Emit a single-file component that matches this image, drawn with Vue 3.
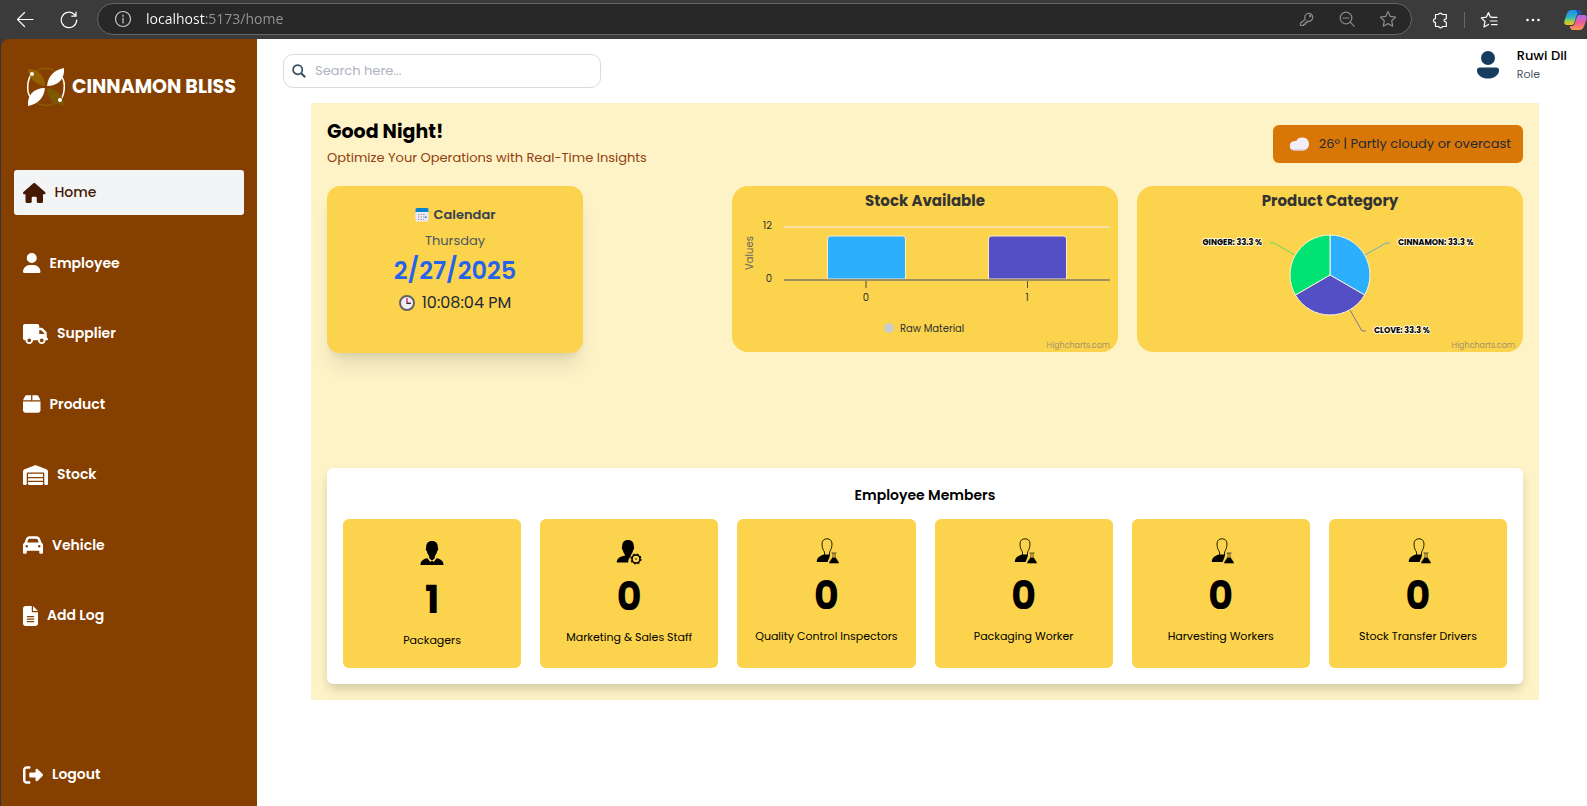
<script setup>
import { ref } from 'vue'

const search = ref('')
const address = ref('localhost:5173/home')

const nav = [
  { label: 'Home', w: 576, active: true, d: 'M575.8 255.5c0 18-15 32.1-32 32.1l-32 0 .7 160.2c0 2.7-.2 5.4-.5 8.1l0 16.2c0 22.1-17.9 40-40 40l-16 0c-1.1 0-2.2 0-3.3-.1c-1.4 .1-2.8 .1-4.2 .1L416 512l-24 0c-22.1 0-40-17.9-40-40l0-24 0-64c0-17.7-14.3-32-32-32l-64 0c-17.7 0-32 14.3-32 32l0 64 0 24c0 22.1-17.9 40-40 40l-24 0-31.9 0c-1.5 0-3-.1-4.5-.2c-1.2 .1-2.4 .2-3.6 .2l-16 0c-22.1 0-40-17.9-40-40l0-112c0-.9 0-1.9 .1-2.8l0-69.7-32 0c-18 0-32-14-32-32.1c0-9 3-17 10-24L266.4 8c7-7 15-8 22-8s15 2 21 7L564.8 231.5c8 7 12 15 11 24z' },
  { label: 'Employee', w: 448, d: 'M224 256A128 128 0 1 0 224 0a128 128 0 1 0 0 256zm-45.7 48C79.8 304 0 383.8 0 482.3C0 498.7 13.3 512 29.7 512l388.6 0c16.4 0 29.7-13.3 29.7-29.7C448 383.8 368.2 304 269.7 304l-91.4 0z' },
  { label: 'Supplier', w: 640, d: 'M48 0C21.5 0 0 21.5 0 48L0 368c0 26.5 21.5 48 48 48l16 0c0 53 43 96 96 96s96-43 96-96l128 0c0 53 43 96 96 96s96-43 96-96l32 0c17.7 0 32-14.3 32-32s-14.3-32-32-32l0-64 0-32 0-18.7c0-17-6.7-33.3-18.7-45.3L512 114.7c-12-12-28.3-18.7-45.3-18.7L416 96l0-48c0-26.5-21.5-48-48-48L48 0zM416 160l50.7 0L544 237.3l0 18.7-128 0 0-96zM112 416a48 48 0 1 1 96 0 48 48 0 1 1 -96 0zm368-48a48 48 0 1 1 0 96 48 48 0 1 1 0-96z' },
  { label: 'Product', w: 448, d: 'M50.7 58.5L0 160l208 0 0-128L93.7 32C75.5 32 58.9 42.3 50.7 58.5zM240 160l208 0L397.3 58.5C389.1 42.3 372.5 32 354.3 32L240 32l0 128zm208 32L0 192 0 416c0 35.3 28.7 64 64 64l320 0c35.3 0 64-28.7 64-64l0-224z' },
  { label: 'Stock', w: 640, d: 'M0 488L0 171.3c0-26.2 15.9-49.7 40.2-59.4L308.1 4.8c7.6-3.1 16.1-3.1 23.8 0L599.8 111.9c24.3 9.7 40.2 33.3 40.2 59.4L640 488c0 13.3-10.7 24-24 24l-48 0c-13.3 0-24-10.7-24-24l0-264c0-17.7-14.3-32-32-32l-384 0c-17.7 0-32 14.3-32 32l0 264c0 13.3-10.7 24-24 24l-48 0c-13.3 0-24-10.7-24-24zm488 24l-336 0c-13.3 0-24-10.7-24-24l0-56 384 0 0 56c0 13.3-10.7 24-24 24zM128 400l0-64 384 0 0 64-384 0zm0-96l0-80 384 0 0 80-384 0z' },
  { label: 'Vehicle', w: 512, d: 'M135.2 117.4L109.1 192l293.8 0-26.1-74.6C372.3 104.6 360.2 96 346.6 96L165.4 96c-13.6 0-25.7 8.6-30.2 21.4zM39.6 196.8L74.8 96.3C88.3 57.8 124.6 32 165.4 32l181.2 0c40.8 0 77.1 25.8 90.6 64.3l35.2 100.5c23.2 9.6 39.6 32.5 39.6 59.2l0 144 0 48c0 17.7-14.3 32-32 32l-32 0c-17.7 0-32-14.3-32-32l0-48L96 400l0 48c0 17.7-14.3 32-32 32l-32 0c-17.7 0-32-14.3-32-32l0-48L0 256c0-26.7 16.4-49.6 39.6-59.2zM128 288a32 32 0 1 0 -64 0 32 32 0 1 0 64 0zm288 32a32 32 0 1 0 0-64 32 32 0 1 0 0 64z' },
  { label: 'Add Log', w: 384, d: 'M64 0C28.7 0 0 28.7 0 64L0 448c0 35.3 28.7 64 64 64l256 0c35.3 0 64-28.7 64-64l0-288-128 0c-17.7 0-32-14.3-32-32L224 0 64 0zM256 0l0 128 128 0L256 0zM112 256l160 0c8.8 0 16 7.2 16 16s-7.2 16-16 16l-160 0c-8.8 0-16-7.2-16-16s7.2-16 16-16zm0 64l160 0c8.8 0 16 7.2 16 16s-7.2 16-16 16l-160 0c-8.8 0-16-7.2-16-16s7.2-16 16-16zm0 64l160 0c8.8 0 16 7.2 16 16s-7.2 16-16 16l-160 0c-8.8 0-16-7.2-16-16s7.2-16 16-16z' },
]
const logout = 'M377.9 105.9L500.7 228.7c7.2 7.2 11.3 17.1 11.3 27.3s-4.1 20.1-11.3 27.3L377.9 406.1c-6.4 6.4-15 9.9-24 9.9c-18.7 0-33.9-15.2-33.9-33.9l0-62.1-128 0c-17.7 0-32-14.3-32-32l0-64c0-17.7 14.3-32 32-32l128 0 0-62.1c0-18.7 15.2-33.9 33.9-33.9c9 0 17.6 3.6 24 9.9zM160 96L96 96c-17.7 0-32 14.3-32 32l0 256c0 17.7 14.3 32 32 32l64 0c17.7 0 32 14.3 32 32s-14.3 32-32 32l-64 0c-53 0-96-43-96-96L0 128C0 75 43 32 96 32l64 0c17.7 0 32 14.3 32 32s-14.3 32-32 32z'

const staff = [
  { label: 'Packagers', count: 1, icon: 'manager' },
  { label: 'Marketing & Sales Staff', count: 0, icon: 'gear' },
  { label: 'Quality Control Inspectors', count: 0, icon: 'flask' },
  { label: 'Packaging Worker', count: 0, icon: 'flask' },
  { label: 'Harvesting Workers', count: 0, icon: 'flask' },
  { label: 'Stock Transfer Drivers', count: 0, icon: 'flask' },
]
</script>

<template>
  <div class="window">
    <header class="browser">
      <button class="tool" aria-label="Back">
        <svg width="18" height="18" viewBox="0 0 18 18" class="line"><path d="M17 8.500H1.500M8.500 1.500L1.500 8.500l7 7" /></svg>
      </button>
      <button class="tool reload" aria-label="Refresh">
        <svg width="18" height="18" viewBox="0 0 18 18" class="line"><path d="M16.700 9a7.700 7.700 0 1 1-2.800-6l1.600 1.500M16 1v4.200h-4.200" /></svg>
      </button>
      <div class="address">
        <svg width="18" height="18" viewBox="0 0 18 18" class="line"><circle cx="9" cy="9" r="7.500" /><path d="M9 8v5M9 5v1.300" /></svg>
        <input v-model="address" class="url" aria-label="Address" spellcheck="false" />
        <div class="marks">
          <button class="tool dim" aria-label="Passwords">
            <svg width="16" height="16" viewBox="0 0 16 16" class="line"><path d="M6.200 8.200A4 4 0 1 1 9.200 10.300L8 10.200v1.500H6.300v1.600H4.600v1.200H1.500v-2.300z" /><circle cx="11.200" cy="5" r=".6" /></svg>
          </button>
          <button class="tool dim" aria-label="Zoom out">
            <svg width="16" height="16" viewBox="0 0 16 16" class="line"><circle cx="7" cy="7" r="5.800" /><path d="M4 7h6M11.200 11.200l4 4" /></svg>
          </button>
          <button class="tool dim" aria-label="Add to favorites">
            <svg width="18" height="18" viewBox="0 0 18 18" class="line"><path d="M9 1.500l2.300 4.900 5.300.7-3.900 3.700 1 5.400L9 13.600l-4.700 2.600 1-5.400L1.400 7.100l5.300-.7z" /></svg>
          </button>
        </div>
      </div>
      <div class="tools">
        <button class="tool" aria-label="Extensions">
          <svg width="18" height="18" viewBox="0 0 18 18" class="line"><path d="M4.500 3.500h3a2 2 0 0 1 3.800 0h4V7.200a1 1 0 0 1-1 1 1.200 1.200 0 0 0 0 2.400 1 1 0 0 1 1 1v3.900h-3.800a2 2 0 0 1-3.800 0H4.500v-3.900a2 2 0 0 1 0-4z" /></svg>
        </button>
        <span class="rule"></span>
        <button class="tool" aria-label="Favorites">
          <svg width="18" height="18" viewBox="0 0 18 18" class="line"><path d="M12 6.200l-1.700-.2L8.500 1.500 6.300 6.200l-5 .7L5 10.500l-1 5.500 4.500-2.600M11.500 6.300H17M10.500 10H17M11.500 13.700H17" /></svg>
        </button>
        <button class="tool" aria-label="Settings and more">
          <svg width="18" height="18" viewBox="0 0 18 18" fill="#fff"><circle cx="3.500" cy="9" r="1.300" /><circle cx="9" cy="9" r="1.300" /><circle cx="14.500" cy="9" r="1.300" /></svg>
        </button>
        <button class="tool" aria-label="Copilot">
          <svg width="23" height="22" viewBox="0 0 23 22">
            <defs>
              <linearGradient id="cool" x1="0" y1="0" x2="0" y2="1"><stop offset="0" stop-color="#1b8df0" /><stop offset=".5" stop-color="#2fb5c4" /><stop offset=".75" stop-color="#a0cf45" /><stop offset="1" stop-color="#f5c518" /></linearGradient>
              <linearGradient id="warm" x1="0" y1="0" x2="0" y2="1"><stop offset="0" stop-color="#a56bf5" /><stop offset=".5" stop-color="#ee5a9b" /><stop offset="1" stop-color="#fb9a4b" /></linearGradient>
            </defs>
            <path d="M8 1h6c2 0 2.700 1.500 3.200 4h-2c-2 0-2.600 1.200-3.200 3.200l-1.600 5.300C9.700 15.500 8.800 16 7 16H3C.5 16-.2 14 .5 11.500L3 4.500C4 2 5.500 1 8 1z" fill="url(#cool)" />
            <path d="M14 1c2 0 2.700 1.500 3.200 4h-3.700L12 1z" fill="#1b4fc4" />
            <path d="M16 6h4c2.500 0 3.200 2 2.500 4.500L20 17.500c-1 2.500-2.500 3.500-5 3.500H9c-2 0-2.700-1.500-3.200-4h2c2 0 2.600-1.200 3.200-3.200l1.600-5.300C13.300 6.500 14.200 6 16 6z" fill="url(#warm)" />
          </svg>
        </button>
      </div>
    </header>

    <div class="page">
      <aside class="sidebar">
        <div class="brand">
          <svg width="40" height="40" viewBox="0 0 40 40">
            <circle cx="20" cy="20" r="18.500" fill="none" stroke="#8f5a06" stroke-width="1.500" />
            <path d="M5.500 7C1 13 .5 25 4 29.500M34.500 33C39 27 39.500 15 36 10.500" fill="none" stroke="#fff" stroke-width="1.500" />
            <path d="M2 2c9 0 17 6 17 17C10 18 3 12 2 2z" fill="#946300" />
            <path d="M38 38c-9 0-17-6-17-17 9 1 16 7 17 17z" fill="#7d5a00" />
            <path d="M38 1c1 10-5 18-17 18C22 9 28 3 38 1z" fill="#fff" />
            <path d="M2 39c-1-10 5-18 17-18C18 31 12 37 2 39z" fill="#fff" />
            <circle cx="6" cy="7" r="2" fill="#fff" /><circle cx="34" cy="33" r="2" fill="#fff" />
          </svg>
          <span>CINNAMON BLISS</span>
        </div>
        <nav>
          <a v-for="n in nav" :key="n.label" href="#" class="item" :class="{ active: n.active }">
            <svg height="20" :viewBox="`0 0 ${n.w} 512`" fill="currentColor"><path :d="n.d" /></svg>{{ n.label }}
          </a>
        </nav>
        <button class="item logout">
          <svg height="20" viewBox="0 0 512 512" fill="currentColor"><path :d="logout" /></svg>Logout
        </button>
      </aside>

      <main>
        <div class="topbar">
          <label class="search">
            <svg width="14" height="14" viewBox="0 0 14 14" fill="none" stroke="#374f63" stroke-width="1.700"><circle cx="5.700" cy="5.700" r="4.600" /><path d="M9 9l4.200 4.200" stroke-width="2" /></svg>
            <input v-model="search" placeholder="Search here..." aria-label="Search" />
          </label>
          <div class="user">
            <svg width="22" height="28" viewBox="0 0 22 28" fill="#163d60"><circle cx="11" cy="7" r="7" /><path d="M3 16.500h16a3 3 0 0 1 3 3.200C22 24 17 27.500 11 27.500S0 24 0 19.700a3 3 0 0 1 3-3.200z" /></svg>
            <div><strong>Ruwi Dil</strong><span>Role</span></div>
          </div>
        </div>

        <section class="panel">
          <div class="intro">
            <div>
              <h1>Good Night!</h1>
              <p>Optimize Your Operations with Real-Time Insights</p>
            </div>
            <div class="weather">
              <svg width="20" height="14" viewBox="0 0 20 14"><path d="M5 13.500a4.700 4.700 0 0 1-.3-9.300c1.200-.4 2-.2 3-.8C9 .8 11.500.3 14 .5c3.500.2 6 3 6 6.500s-2.500 6.500-6 6.500z" fill="#f3eef9" /><path d="M1.500 11.500c1 1 2 1.500 3.500 1.500h9c2 0 3.600-.7 4.600-2" fill="none" stroke="#cfc0dd" /></svg>
              <span>26° | Partly cloudy or overcast</span>
            </div>
          </div>

          <div class="charts">
            <div class="calendar">
              <h2>
                <svg width="14" height="14" viewBox="0 0 14 14"><rect x=".5" y=".5" width="13" height="13" rx="1.500" fill="#eceaf6" /><path d="M2 0h10a1.500 1.500 0 0 1 1.500 1.500V4H.5V1.500A1.500 1.500 0 0 1 2 0z" fill="#0784cc" /><path d="M3 6.500h8M3 9h8M3 11.500h6" stroke="#83839a" stroke-dasharray="1.200 1.400" /><path d="M10 8.500h1.500v1.500H10z" fill="#0784cc" /></svg>
                Calendar
              </h2>
              <p class="day">Thursday</p>
              <p class="date">2/27/2025</p>
              <p class="time">
                <svg width="16" height="16" viewBox="0 0 16 16"><circle cx="8" cy="8" r="7" fill="#f1eff5" stroke="#636363" stroke-width="2" /><path d="M8 8.500V3" stroke="#e0245e" stroke-width="1.400" /><path d="M7.500 8.300H12" stroke="#333" stroke-width="1.400" /></svg>
                10:08:04 PM
              </p>
            </div>

            <svg class="chart" viewBox="0 0 386 166" role="img" aria-label="Stock Available">
              <text x="193" y="20" class="title">Stock Available</text>
              <path d="M52 41h326" stroke="#f5dfa4" stroke-width="2" />
              <path d="M95.500 93V53a3 3 0 0 1 3-3h72a3 3 0 0 1 3 3v40z" fill="#2caffe" stroke="#fbecc4" />
              <path d="M256.500 93V53a3 3 0 0 1 3-3h72a3 3 0 0 1 3 3v40z" fill="#544fc5" stroke="#fbecc4" />
              <path d="M52 94h326" stroke="#a29061" stroke-width="2" />
              <path d="M134 95v7" stroke="#a68d42" stroke-width="2" />
              <path d="M295.500 95v7" stroke="#5e5030" />
              <g class="label"><text x="40" y="43" text-anchor="end">12</text><text x="40" y="96" text-anchor="end">0</text><text x="134" y="115" text-anchor="middle">0</text><text x="295" y="115" text-anchor="middle">1</text></g>
              <text transform="rotate(-90 21 67)" x="21" y="67" text-anchor="middle" class="axis">Values</text>
              <circle cx="157" cy="142" r="5" fill="#ccc" />
              <text x="168" y="146" class="legend">Raw Material</text>
              <text x="378" y="162" text-anchor="end" class="credit">Highcharts.com</text>
            </svg>

            <svg class="chart" viewBox="0 0 386 166" role="img" aria-label="Product Category">
              <text x="193" y="20" class="title">Product Category</text>
              <g stroke="#fdf3d2" stroke-linejoin="round">
                <path d="M193 89V49a40 40 0 0 1 34.640 60z" fill="#2caffe" />
                <path d="M193 89l34.640 20a40 40 0 0 1-69.280 0z" fill="#544fc5" />
                <path d="M193 89l-34.640 20A40 40 0 0 1 193 49z" fill="#00e272" />
              </g>
              <g fill="none">
                <path d="M228 69l21-12h4" stroke="#64b2c2" />
                <path d="M213 124l12 21h4" stroke="#82719a" />
                <path d="M158 69l-21-12h-4" stroke="#63d95d" />
              </g>
              <g class="slice"><text x="125" y="59" text-anchor="end">GINGER: 33.3 %</text><text x="261" y="59">CINNAMON: 33.3 %</text><text x="237" y="147">CLOVE: 33.3 %</text></g>
              <text x="378" y="162" text-anchor="end" class="credit">Highcharts.com</text>
            </svg>
          </div>

          <div class="members">
            <h2>Employee Members</h2>
            <div class="staff">
              <article v-for="s in staff" :key="s.label">
                <div class="figure" :class="s.icon">
                  <svg v-if="s.icon === 'manager'" width="24" height="26" viewBox="0 0 24 26"><path d="M12 1c4 0 6 2.500 5.800 6.500.8 1 .3 3-.6 3.500-.5 2.500-1.500 4-2.400 5v2L12 21l-2.800-3v-2c-.9-1-1.900-2.500-2.400-5-.9-.5-1.400-2.500-.6-3.500C6 3.500 8 1 12 1z" /><path d="M7.500 18.300L10.500 22l1-1.500h1l1 1.500 3-3.700c4.500.8 7 2.700 7 6.700H.5c0-4 2.500-5.900 7-6.700z" /><path d="M8 18l2.500 3.500L12 20M16 18l-2.500 3.500L12 20" fill="none" stroke="#fcd34d" stroke-width=".8" /></svg>
                  <svg v-else-if="s.icon === 'gear'" width="26" height="26" viewBox="0 0 26 26"><path d="M12 1c4 0 6 2.500 5.800 6.500.8 1 .3 3-.6 3.500-.5 2.500-1.500 4-2.400 5v1.500C13 19 12 21 12.300 23.500H.8c0-4 3-6 8.400-7V16c-.9-1-1.900-2.500-2.400-5-.9-.5-1.400-2.500-.6-3.500C6 3.500 8 1 12 1z" /><circle cx="20" cy="20" r="4" fill="none" stroke="#000" stroke-width="1.600" /><circle cx="20" cy="20" r="5" fill="none" stroke="#000" stroke-width="1.200" stroke-dasharray="2 1.927" /><circle cx="20" cy="20" r=".8" /></svg>
                  <svg v-else width="26" height="26" viewBox="-3 0 26 26" overflow="visible"><path d="M8.500 17V14C7 12 6 9 6 6c0-3.500 2-5.200 5-5.200S16 2.500 16 6c0 3-1 6-2.500 8v3" fill="none" stroke="#222000" /><path d="M8 16.500h6c0 2-1 4-2.500 7.500H.8c0-4 2.500-6 7.200-7.500z" /><path d="M15.500 14.500h5v1h-1V19l3.300 5c.5 1-.1 1.500-1 1.500h-7.600c-.9 0-1.500-.5-1-1.500l3.300-5v-3.500h-1zM17.500 15.500v4h1v-4z" fill-rule="evenodd" stroke="#fcd34d" stroke-width=".4" /></svg>
                </div>
                <strong>{{ s.count }}</strong>
                <span>{{ s.label }}</span>
              </article>
            </div>
          </div>
        </section>
      </main>
    </div>
  </div>
</template>

<style>
body { margin: 0; background: #fff; }
</style>

<style scoped>
* { box-sizing: border-box; }
h1, h2, p { margin: 0; }
button, a { font: inherit; color: inherit; text-decoration: none; }
svg { display: block; flex: none; }
.window { min-height: 100vh; display: flex; flex-direction: column; font-family: Poppins, Inter, sans-serif; font-size: 13px; color: #000; }

.browser { height: 39px; background: #3b3b3b; display: flex; align-items: center; overflow: hidden; padding-left: 16px; }
.tool { display: flex; padding: 0; border: 0; background: none; color: #fff; }
.tool.dim { color: #8b8b8b; }
.line { fill: none; stroke: currentColor; stroke-width: 1.2; stroke-linecap: round; stroke-linejoin: round; }
.reload { margin-left: 26px; }
.address { flex: 1; height: 32px; margin: 0 19px 2px 19px; padding: 0 14px 0 16px; display: flex; align-items: center; border: 1px solid #666; border-radius: 16px; background: #282828; color: #c9c9c9; }
.url { flex: 1; min-width: 0; margin-left: 14px; padding: 0; border: 0; outline: 0; font: 14px/20px "Open Sans", sans-serif; background: linear-gradient(to right, #fff 59px, #979797 59px); -webkit-background-clip: text; background-clip: text; color: transparent; }
.marks { display: flex; align-items: center; gap: 24px; }
.tools { display: flex; align-items: center; gap: 15px; }
.tools .tool:nth-child(4) { margin: 0 7px 0 11px; }
.rule { width: 1px; height: 16px; background: #666; }

.page { flex: 1; display: flex; background: #3b3b3b; border-left: 1px solid #33363b; }
.sidebar { width: 256px; flex: none; display: flex; flex-direction: column; padding: 28px 13px 9px; background: #853f00; border-top-left-radius: 8px; color: #fff; }
.brand { display: flex; align-items: center; gap: 6px; padding-left: 12px; font-size: 19px; font-weight: 700; line-height: 40px; white-space: nowrap; }
nav { display: flex; flex-direction: column; justify-content: space-between; height: 468px; margin-top: 63px; }
.item { display: flex; align-items: center; gap: 9px; height: 45px; padding: 0 9px; border: 0; border-radius: 3px; background: none; font-size: 14px; font-weight: 600; }
.item.active { background: #f3f4f6; color: #451a03; font-weight: 500; }
.logout { margin-top: auto; }

main { flex: 1; min-width: 0; padding-bottom: 16px; background: #fff; }
.topbar { height: 64px; display: flex; align-items: center; justify-content: space-between; padding: 0 20px 0 26px; }
.search { width: 318px; height: 34px; display: flex; align-items: center; gap: 9px; padding: 0 8px; border: 1px solid #d9dbe0; border-radius: 10px; }
.search input { flex: 1; min-width: 0; padding: 0; border: 0; outline: 0; background: none; font: inherit; }
.search input::placeholder { color: #adb3bf; opacity: 1; }
.user { display: flex; align-items: center; gap: 18px; padding-bottom: 12px; }
.user strong, .user span { display: block; line-height: 18px; }
.user strong { font-weight: 500; }
.user span { font-size: 11px; color: #4b5563; }

.panel { margin: 0 48px 0 54px; padding: 16px; background: #fef3c7; }
.intro { display: flex; align-items: center; justify-content: space-between; }
h1 { font-size: 19px; line-height: 26px; font-weight: 700; }
.intro p { margin-top: 3px; line-height: 20px; color: #92400e; }
.weather { display: flex; align-items: center; gap: 10px; height: 38px; padding: 0 12px 0 16px; border-radius: 6px; background: #d97706; color: #1f2937; }
.charts { display: grid; grid-template-columns: repeat(3, 1fr); gap: 19px; align-items: start; min-height: 263px; margin-top: 18px; }
.calendar { width: 256px; max-width: 100%; height: 167px; padding-top: 17px; border-radius: 13px; background: #fcd34d; box-shadow: 0 16px 20px -4px rgba(0, 0, 0, .1), 0 6px 8px -5px rgba(0, 0, 0, .1); text-align: center; }
.calendar h2 { display: flex; justify-content: center; align-items: center; gap: 5px; font-size: 13px; line-height: 24px; font-weight: 600; color: #374151; }
.day { margin-top: 4px; line-height: 20px; color: #4b5563; }
.date { margin-top: 2px; font-size: 24px; line-height: 36px; font-weight: 600; color: #2563eb; }
.time { display: flex; justify-content: center; align-items: center; gap: 7px; font-size: 16px; line-height: 28px; color: #1f2937; }
.chart { width: 100%; height: auto; border-radius: 16px; background: #fcd34d; font-family: Poppins, Inter, sans-serif; }
.title { font-size: 15px; font-weight: 700; fill: #333; text-anchor: middle; }
.label { font-size: 10px; fill: #333; }
.axis { font-size: 10px; fill: #666; }
.legend { font-size: 10px; fill: #333; }
.credit { font-size: 8px; fill: #a3946a; }
.slice { font-size: 8px; font-weight: 700; fill: #000; stroke: #fff8e0; stroke-width: 2px; paint-order: stroke; stroke-linejoin: round; }

.members { margin-top: 19px; padding: 16px; border-radius: 6px; background: #fff; box-shadow: 0 8px 12px -2px rgba(0, 0, 0, .12), 0 3px 8px rgba(0, 0, 0, .06); }
.members h2 { font-size: 14px; line-height: 22px; font-weight: 600; text-align: center; }
.staff { display: grid; grid-template-columns: repeat(6, 1fr); gap: 19px; margin-top: 13px; }
article { min-height: 149px; padding: 16px 8px; display: flex; flex-direction: column; align-items: center; border-radius: 6px; background: #fcd34d; text-align: center; }
.figure { display: flex; align-items: center; height: 32px; }
.figure.manager { height: 36px; }
.figure.gear { height: 33px; }
article strong { margin-top: 9px; font-size: 38px; line-height: 40px; font-weight: 700; }
article span { margin-top: 10px; font-size: 11px; line-height: 20px; }
</style>
